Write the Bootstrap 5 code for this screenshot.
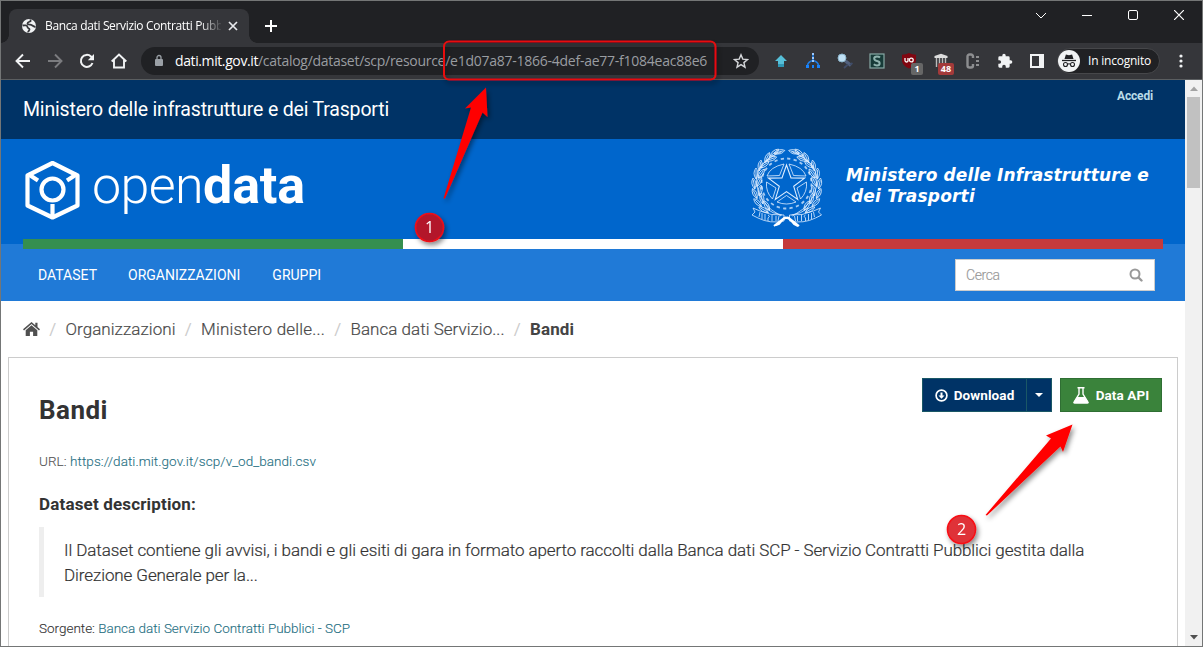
<!DOCTYPE html>
<html lang="it">
<head>
<meta charset="utf-8">
<meta name="viewport" content="width=device-width, initial-scale=1">
<title>Banca dati Servizio Contratti Pubblici - Bandi</title>
<link href="https://cdn.jsdelivr.net/npm/bootstrap@5.3.0/dist/css/bootstrap.min.css" rel="stylesheet">
<style>
  body { font-family: Roboto, "Open Sans", sans-serif; color: #333; font-size: 14px; line-height: 20px; }
  svg { display: block; flex: none; }
  a { text-decoration: none; }
  .browser { width: 1203px; height: 647px; border: 1px solid #747676; }
  .chrome { font-family: "Open Sans", "Noto Sans", sans-serif; color: #fff; flex: none; }
  .tabstrip { height: 42px; background: #202124; padding-left: 8px; }
  .tab-item { width: 240px; height: 34px; margin-top: 8px; background: #35363a; border-radius: 8px 8px 0 0; padding: 0 10px 0 12px; position: relative; }
  .tab-item::before, .tab-item::after { content: ""; position: absolute; bottom: 0; width: 8px; height: 8px; }
  .tab-item::before { left: -8px; background: radial-gradient(circle at 0 0, #202124 7.500px, #35363a 8px); }
  .tab-item::after { right: -8px; background: radial-gradient(circle at 100% 0, #202124 7.500px, #35363a 8px); }
  .tab-title { width: 176px; margin-left: 8px; font-size: 12px; letter-spacing: -.351px; -webkit-mask-image: linear-gradient(90deg, #000 155px, transparent 178px); mask-image: linear-gradient(90deg, #000 155px, transparent 178px); }
  .win-btn { width: 46px; height: 28px; }
  .toolbar { height: 37px; background: #35363a; border-bottom: 1px solid #5b5e60; padding-left: 6px; }
  .tool { width: 32px; height: 28px; flex: none; }
  .omnibox { width: 618px; height: 28px; margin: 0 6px; border-radius: 14px; background: #202124; font-size: 14px; color: #9a9da1; padding-left: 12px; padding-right: 10px; flex: none; }
  .address { margin-left: 10px; }
  .u-host { letter-spacing: -.396px; color: #fff; }
  .u-path { letter-spacing: -.287px; }
  .u-id { letter-spacing: -.25px; }
  .ext-badge { position: absolute; left: 18px; top: 16px; min-width: 12px; height: 12px; border-radius: 2px; background: #666; font: 700 9px/12px "Open Sans", sans-serif; text-align: center; }
  .ext-badge.hot { left: 13px; width: 16px; background: #a33a3a; }
  .incognito { width: 103px; height: 26px; margin-left: 4px; border: 1px solid #46474a; border-radius: 13px; background: #202124; font-size: 12px; letter-spacing: -.216px; flex: none; }
  .view { flex: 1; min-height: 0; }
  .site { width: 1184px; background: #fff; overflow: hidden; }
  .scroller { width: 17px; background: #f1f1f1; padding: 0 1px 0 2px; }
  .thumb { height: 91px; background: #c1c1c1; width: 13px; }
  .top-bar { height: 59px; background: #036; color: #fff; padding: 0 32px 0 22px; }
  .org-name { font-size: 19.5px; letter-spacing: -.18px; }
  .login { font-size: 12px; font-weight: 700; color: #b9dce8; margin-top: 6px; letter-spacing: -.164px; }
  .brand-bar { height: 100px; background: #06c; padding-left: 24px; color: #fff; }
  .cube { margin-top: 21px; }
  .wordmark { font-size: 52px; line-height: 60px; margin: 17px 0 0 12px; }
  .w-open { letter-spacing: -.621px; font-weight: 300; }
  .w-data { letter-spacing: -.133px; font-weight: 700; }
  .crest { margin-top: 9px; }
  .ministry { font: italic 700 17px/21px "DejaVu Sans", Verdana, sans-serif; letter-spacing: .114px; margin: 26px 36px 0 23px; width: 303px; }
  .ministry span { margin-left: 5px; letter-spacing: .204px; }
  .flag { height: 10px; padding: 0 22px 0 22px; background: linear-gradient(#06c 5px, #207ad7 5px); }
  .stripe-g { background: #358f4f; }
  .stripe-r { background: #c53a3c; }
  .menu-bar { height: 52px; background: #207ad7; padding: 0 30px 0 37px; }
  .menu-bar a { color: #fff; }
  .search-field { width: 200px; height: 32px; background: #fff; border: 1px solid #ccc; padding: 0 11px 0 10px; color: #999; margin-bottom: 1px; letter-spacing: -.4px; font-weight: 300; -webkit-text-stroke: .15px; }
  .crumbs { height: 56px; padding-left: 22px; font-size: 17px; }
  .crumbs a { color: #4a4a4a; font-weight: 300; }
  .crumbs i { width: 25.500px; text-align: center; color: #ccc; font-style: normal; }
  .crumbs b { color: #444; letter-spacing: .091px; }
  .panel { width: 1170px; height: 300px; margin-left: 7px; border: 1px solid #ccc; padding: 20px 15px 0 30px; }
  .panel h1 { font-size: 26px; line-height: 36px; font-weight: 700; margin: 14px 0 0; letter-spacing: .47px; }
  .act { height: 34px; font-size: 13.5px; font-weight: 700; border-radius: 0; border: 1px solid #1a5766; background: #036; color: #fff; padding: 0; }
  .act span { letter-spacing: .1px; }
  .act-main { width: 105px; }
  .act-caret { width: 26px; }
  .act-api { width: 102px; background: #3a833b; border-color: #2f6f33; }
  .src { color: #277083; }
  .meta { font-weight: 300; font-size: 13.5px; -webkit-text-stroke: .12px; }
  .meta-url { margin-top: 23px; color: #555; letter-spacing: .064px; }
  .meta-source { margin-top: 20.500px; letter-spacing: -.014px; }
  .sub { font-size: 17px; font-weight: 700; line-height: 22px; margin-top: 22px; letter-spacing: .166px; }
  .quote { border-left: 5px solid #eee; padding: 10.500px 20px 9.500px; margin-top: 12px; font-size: 17px; font-weight: 300; line-height: 25px; height: 70px; width: 1123px; letter-spacing: -.087px; }
  .quote, .crumbs a { -webkit-text-stroke: .2px; }
  .notes { position: absolute; left: 0; top: 0; pointer-events: none; }
</style>
</head>
<body>
<div class="browser d-flex flex-column position-relative overflow-hidden">
  <header class="chrome">
    <div class="tabstrip d-flex">
      <div class="tab-item d-flex align-items-center">
        <svg width="16" height="16" viewBox="0 0 16 16"><circle cx="8" cy="8" r="7" fill="#f1f3f4"/><path d="M1.500 7.500c2.500-.5 5-.2 5 1.500s2 .8 2 2.300-1.500 1.500-1.300 3M9.500 1.500v1.800C8 4 6.500 4 6.500 5.500s3 1 4 1.500 1.500 1.500 4 2" fill="none" stroke="#35363a" stroke-width="1.800"/></svg>
        <span class="tab-title text-nowrap overflow-hidden">Banca dati Servizio Contratti Pubb</span>
        <svg class="ms-auto" width="12" height="12" viewBox="0 0 12 12"><path d="M2 2l8 8M10 2l-8 8" stroke="#e8eaed" stroke-width="1.700"/></svg>
      </div>
      <svg class="mt-3 ms-3" width="12" height="18" viewBox="0 0 12 18"><path d="M0 9h12M6 3v12" stroke="#fff" stroke-width="2"/></svg>
      <div class="ms-auto d-flex">
        <span class="win-btn d-flex align-items-center justify-content-center"><svg width="10" height="7"><path d="M0 1l5 5 5-5" fill="none" stroke="#fff"/></svg></span>
        <span class="win-btn d-flex align-items-center justify-content-center"><svg width="10" height="1"><path d="M0 .5h10" stroke="#fff"/></svg></span>
        <span class="win-btn d-flex align-items-center justify-content-center"><svg width="10" height="10"><rect x=".5" y=".5" width="9" height="9" rx="1.500" fill="none" stroke="#fff"/></svg></span>
        <span class="win-btn d-flex align-items-center justify-content-center"><svg width="10" height="10"><path d="M0 0l10 10M10 0L0 10" stroke="#fff" stroke-width="1.200"/></svg></span>
      </div>
    </div>
    <div class="toolbar d-flex align-items-center">
      <span class="tool d-flex align-items-center justify-content-center"><svg width="16" height="16" fill="none" stroke="#f1f3f4" stroke-width="1.900"><path d="M15 8H2M8 1.500L1.500 8 8 14.500"/></svg></span>
      <span class="tool d-flex align-items-center justify-content-center"><svg width="16" height="16" fill="none" stroke="#7b7c7f" stroke-width="1.900"><path d="M1 8h13M8 1.500L14.500 8 8 14.500"/></svg></span>
      <span class="tool d-flex align-items-center justify-content-center"><svg width="16" height="16"><path d="M13.500 10A6 6 0 1 1 12 3.500L13.500 5" fill="none" stroke="#f1f3f4" stroke-width="2"/><path d="M15 1v6.200H8.800z" fill="#f1f3f4"/></svg></span>
      <span class="tool d-flex align-items-center justify-content-center"><svg width="16" height="16" fill="none" stroke="#f1f3f4" stroke-width="1.900"><path d="M.7 8.500L8 1.500l7.300 7M3 7v7.500h10V7"/></svg></span>
      <div class="omnibox d-flex align-items-center">
        <svg width="12" height="14"><rect x="2" y="5" width="8" height="7" rx="1" fill="#9aa0a6"/><path d="M4 5V3.500a2 2 0 0 1 4 0V5" fill="none" stroke="#9aa0a6" stroke-width="1.300"/></svg>
        <span class="address text-nowrap"><span class="u-host">dati.mit.gov.it</span><span class="u-path">/catalog/dataset/scp/resource/</span><span class="u-id">e1d07a87-1866-4def-ae77-f1084eac88e6</span></span>
        <svg class="ms-auto" width="16" height="16" viewBox="0 0 16 16"><path d="M8 1.800l1.800 4.300 4.700.4-3.600 3.100 1.100 4.600L8 11.700l-4 2.500 1.100-4.600-3.600-3.100 4.700-.4z" fill="none" stroke="#d5d7da" stroke-width="1.400"/></svg>
      </div>
      <span class="tool d-flex align-items-center justify-content-center"><svg width="16" height="16"><path d="M8 2l6 6h-3v5.500H5V8H2z" fill="#56bfd8"/><path d="M5 11h6v3H5z" fill="#2f97b5"/></svg></span>
      <span class="tool d-flex align-items-center justify-content-center"><svg width="16" height="16"><path d="M8 2v7M2.500 12q1-3.500 5.500-4.500 4.500 1 5.500 4.500" fill="none" stroke="#1f7fe8" stroke-width="1.600"/><g fill="#9cc9ff"><rect x="7" y="0" width="2" height="2"/><rect x="7" y="4" width="2" height="2"/><rect x="7" y="7" width="2" height="2"/></g><g fill="#1683ff"><rect x="1" y="12" width="3" height="3"/><rect x="7" y="12" width="2" height="3"/><rect x="12" y="12" width="3" height="3"/></g></svg></span>
      <span class="tool d-flex align-items-center justify-content-center"><svg width="16" height="16"><circle cx="5" cy="5" r="4" fill="#bfe0f4" stroke="#8cb5cc"/><path d="M8.500 8l5.500 4.500" stroke="#52617d" stroke-width="3.500"/><path d="M7 15l4-3.500M13 12l2.500-2" stroke="#3f4c68" stroke-width="1.800"/></svg></span>
      <span class="tool d-flex align-items-center justify-content-center"><svg width="16" height="16"><rect x="1" y="1" width="14" height="14" fill="#173b38" stroke="#87aaa5" stroke-width="1.200"/><path d="M11 4.500Q10 3.500 8 3.500C4 3.500 4.500 7.500 8 8s3.500 4.500 0 4.500q-2 0-3.200-1.200" fill="none" stroke="#8fb3ae" stroke-width="2"/></svg></span>
      <span class="tool position-relative d-flex align-items-center justify-content-center"><svg width="16" height="16"><path d="M8 0q3 1.600 7 1.800v6Q14.500 13 8 15.500 1.500 13 1 7.800v-6Q5 1.600 8 0z" fill="#800610"/><path d="M4 5v2.500q0 1.500 1.500 1.500T7 7.500V5" fill="none" stroke="#fff" stroke-width="1.300"/><circle cx="10.300" cy="7" r="1.900" fill="none" stroke="#fff" stroke-width="1.300"/></svg><span class="ext-badge">1</span></span>
      <span class="tool position-relative d-flex align-items-center justify-content-center"><svg width="16" height="16"><path d="M1.500 5V3L8 .8 14.500 3v2z" fill="#ddd"/><path d="M3.500 5v9M6.500 5v9M9.500 5v9M12.500 5v9" stroke="#bbb" stroke-width="1.400"/></svg><span class="ext-badge hot">48</span></span>
      <span class="tool d-flex align-items-center justify-content-center"><svg width="16" height="16"><path d="M8 5V3.500a2 2 0 0 0-2-2H4.500a2 2 0 0 0-2 2v9a2 2 0 0 0 2 2H6a2 2 0 0 0 2-2V11" fill="none" stroke="#8d8e90" stroke-width="2.400"/><path d="M12.500 3v10" stroke="#8d8e90" stroke-width="3" stroke-dasharray="2 2"/></svg></span>
      <span class="tool d-flex align-items-center justify-content-center"><svg width="16" height="16" viewBox="0 0 24 24"><path d="M20.500 11H19V7a2 2 0 0 0-2-2h-4V3.500a2.500 2.500 0 0 0-5 0V5H4a2 2 0 0 0-2 2v3.800h1.500a2.700 2.700 0 0 1 0 5.400H2V20a2 2 0 0 0 2 2h3.800v-1.500a2.700 2.700 0 0 1 5.400 0V22H17a2 2 0 0 0 2-2v-4h1.500a2.500 2.500 0 0 0 0-5z" fill="#f1f3f4"/></svg></span>
      <span class="tool d-flex align-items-center justify-content-center"><svg width="14" height="14"><path d="M0 0h14v14H0zM2 2v10h7V2z" fill="#f1f3f4" fill-rule="evenodd"/></svg></span>
      <div class="incognito d-flex align-items-center">
        <svg width="22" height="22" viewBox="0 0 22 22"><circle cx="11" cy="11" r="11" fill="#f1f3f4"/><path d="M4 10.500h14" stroke="#202124" stroke-width="1.300"/><path d="M6.500 9l1.400-4.500 3.100.7 3.100-.7L15.500 9z" fill="#202124"/><g fill="none" stroke="#202124" stroke-width="1.100"><circle cx="7.500" cy="14.500" r="2"/><circle cx="14.500" cy="14.500" r="2"/><path d="M9.500 14.300q1.500-1 3 0"/></g></svg>
        <span class="text-nowrap ms-2">In incognito</span>
      </div>
      <svg class="mx-auto" width="4" height="14"><g fill="#f1f3f4"><circle cx="2" cy="2" r="1.600"/><circle cx="2" cy="7" r="1.600"/><circle cx="2" cy="12" r="1.600"/></g></svg>
    </div>
  </header>

  <div class="view d-flex">
    <main class="site">
      <div class="top-bar d-flex justify-content-between">
        <span class="org-name align-self-center text-nowrap">Ministero delle infrastrutture e dei Trasporti</span>
        <a class="login align-self-start" href="#">Accedi</a>
      </div>
      <div class="brand-bar d-flex align-items-start">
        <svg class="cube" width="55" height="61" viewBox="0 0 55 61" fill="none" stroke="#fff" stroke-width="4.200"><path d="M27.500 3L52.500 15.500v30L27.500 57.500 2.500 45.500v-30z" stroke-linejoin="round"/><circle cx="27.500" cy="29.500" r="11"/><path d="M3 14l10 6.500M52 14l-10 6.500M27.500 44v13"/></svg>
        <span class="wordmark text-nowrap"><span class="w-open">open</span><span class="w-data">data</span></span>
        <svg class="crest ms-auto" width="72" height="82" viewBox="0 0 72 82" fill="none" stroke="#dfeeff" stroke-width=".8">
          <defs>
            <g id="leaf"><path d="M0 5Q-4-1 0-6 4-1 0 5zM0 5v-9"/></g>
            <g id="branch">
              <use href="#leaf" transform="translate(28 4) rotate(75)"/><use href="#leaf" transform="translate(23 5) rotate(50)"/><use href="#leaf" transform="translate(20 11) rotate(70)"/><use href="#leaf" transform="translate(16 10) rotate(25)"/><use href="#leaf" transform="translate(13 17) rotate(55)"/><use href="#leaf" transform="translate(9 18) rotate(10)"/><use href="#leaf" transform="translate(10 26) rotate(35)"/><use href="#leaf" transform="translate(5 26) rotate(0)"/><use href="#leaf" transform="translate(8 34) rotate(25)"/><use href="#leaf" transform="translate(3 36) rotate(-10)"/><use href="#leaf" transform="translate(9 43) rotate(10)"/><use href="#leaf" transform="translate(4 46) rotate(-25)"/><use href="#leaf" transform="translate(11 51) rotate(-10)"/><use href="#leaf" transform="translate(7 55) rotate(-45)"/><use href="#leaf" transform="translate(16 58) rotate(-30)"/><use href="#leaf" transform="translate(13 62) rotate(-60)"/>
              <path d="M30 4Q2 16 6 38q2 18 24 30M14 60q8 6 17 7"/>
              <path d="M2 60l7 3q11 5 24 4v6q-14 3-26-3l-6-3 3-3z"/><path d="M9 64l-1 5m3-4v6m3-5v6m3-5q3 1 0 3v3m4-6v6m4-5v5m3-5l-1 5"/>
            </g>
          </defs>
          <use href="#branch"/><use href="#branch" transform="translate(71.500 0) scale(-1 1)"/>
          <circle cx="35.500" cy="35.500" r="25" stroke-width="1.800" stroke-dasharray="3.270 3.270" opacity=".75"/>
          <path d="M35.500 17l4.500 12.900 13.600.2-10.900 8.200 4 13.100-11.200-7.800-11.200 7.800 4-13.100-10.900-8.200 13.600-.2z" stroke-width="1.100"/>
          <path d="M33 16l-4.500 11.500-12.500.5q3-9 17-12zM38 16l4.500 11.500 12.500.5q-3-9-17-12zM15.500 34l9.500 6-3.500 11q-7-7-6-17zM55.500 34l-9.500 6 3.500 11q7-7 6-17zM26 54l9.500-6.500 9.500 6.500q-9.500 4-19 0z"/>
          <path d="M23 78l10-8q4-2 10 6l4 2M48 78l-10-8q-4-2-10 6l-3 1" stroke-width="2" stroke="#fff"/>
        </svg>
        <div class="ministry text-nowrap">Ministero delle Infrastrutture e<br><span>dei Trasporti</span></div>
      </div>
      <div class="flag d-flex"><div class="stripe-g flex-fill"></div><div class="flex-fill bg-white"></div><div class="stripe-r flex-fill"></div></div>
      <nav class="menu-bar d-flex align-items-center">
        <a href="#">DATASET</a><a style="margin-left:31px" href="#">ORGANIZZAZIONI</a><a style="margin-left:32px" href="#">GRUPPI</a>
        <div class="search-field ms-auto d-flex align-items-center justify-content-between"><span>Cerca</span><svg width="14" height="14"><circle cx="6" cy="6" r="4.500" fill="none" stroke="#999" stroke-width="2"/><path d="M9.500 9.500l3 3" stroke="#999" stroke-width="2.400" stroke-linecap="round"/></svg></div>
      </nav>
      <div class="crumbs d-flex align-items-center text-nowrap">
        <svg width="17" height="14" viewBox="0 0 17 14" fill="#505050"><path d="M8.500 0L0 7.200l1 1.200 7.500-6.300L16 8.400l1-1.200-2.500-2.100V.8h-2.200v2.400z"/><path d="M8.500 3.300L2.700 8.200V14h4.200V9.800h3.200V14h4.200V8.200z"/></svg><i>/</i>
        <a style="letter-spacing:.053px" href="#">Organizzazioni</a><i>/</i><a style="letter-spacing:.185px" href="#">Ministero delle...</a><i>/</i><a style="letter-spacing:.024px" href="#">Banca dati Servizio...</a><i>/</i><b>Bandi</b>
      </div>
      <section class="panel">
        <div class="d-flex justify-content-between align-items-start">
          <h1>Bandi</h1>
          <div class="d-flex gap-2">
            <div class="btn-group">
              <button class="btn act act-main d-flex align-items-center justify-content-center"><svg width="13" height="13"><circle cx="6.500" cy="6.500" r="5.400" fill="none" stroke="#fff" stroke-width="1.700"/><path d="M5.500 3.500h2v3h2l-3 3.200-3-3.200h2z" fill="#fff"/></svg><span style="margin-left:6px">Download</span></button>
              <button class="btn act act-caret d-flex align-items-center justify-content-center"><svg width="8" height="4"><path d="M0 0h8L4 4z" fill="#fff"/></svg></button>
            </div>
            <button class="btn act act-api d-flex align-items-center justify-content-center"><svg width="16" height="17" viewBox="0 0 16 17" fill="none" stroke="#fff"><path d="M4.500 .7h7M6 1v6L1 15.200q-.3.800.6.800h12.800q.9 0 .6-.8L10 7V1" stroke-width="1.400"/><path d="M4 10.500h8l3 5H1z" fill="#fff"/></svg><span style="margin-left:7px">Data API</span></button>
          </div>
        </div>
        <div class="meta meta-url text-nowrap">URL: <a class="src" href="#">https://dati.mit.gov.it/scp/v_od_bandi.csv</a></div>
        <div class="sub">Dataset description:</div>
        <div class="quote text-nowrap">Il Dataset contiene gli avvisi, i bandi e gli esiti di gara in formato aperto raccolti dalla Banca dati SCP - Servizio Contratti Pubblici gestita dalla<br>Direzione Generale per la...</div>
        <div class="meta meta-source text-nowrap">Sorgente: <a class="src" href="#">Banca dati Servizio Contratti Pubblici - SCP</a></div>
      </section>
    </main>
    <aside class="scroller d-flex flex-column">
      <svg width="14" height="17"><path d="M3 11h8L7 6.500z" fill="#a3a3a3"/></svg>
      <div class="thumb"></div>
      <svg class="mt-auto" width="14" height="17"><path d="M3 6h8l-4 4.500z" fill="#505050"/></svg>
    </aside>
  </div>

  <svg class="notes" width="1201" height="645" viewBox="1 1 1201 645">
    <defs><filter id="soft" x="-20%" y="-20%" width="150%" height="150%"><feDropShadow dx="2" dy="3" stdDeviation="2.500" flood-color="#000" flood-opacity=".45"/></filter></defs>
    <g filter="url(#soft)">
      <rect x="444" y="41.500" width="271.500" height="38" rx="5" fill="none" stroke="#e80c0f" stroke-width="2"/>
      <path d="M443.500 198.500L471 107.500 465 108.500 486 87.500 487.500 117 482.500 112.500 445 198.500z" fill="red"/>
      <path d="M985.500 515L1051 438.500 1046 435.500 1072.500 424.500 1063 452 1060.500 446.500 987 515.500z" fill="red"/>
    </g>
    <g filter="url(#soft)" font-family="Open Sans, sans-serif" font-size="16" fill="#fff" text-anchor="middle">
      <circle cx="429.500" cy="227.500" r="14" fill="#b3152c" stroke="#f01018" stroke-width="1.600"/><text x="429.500" y="233">1</text>
      <circle cx="961.500" cy="529.500" r="14" fill="#df3237" stroke="#f81014" stroke-width="1.600"/><text x="961.500" y="535">2</text>
    </g>
  </svg>
</div>
<script src="https://cdn.jsdelivr.net/npm/bootstrap@5.3.0/dist/js/bootstrap.bundle.min.js"></script>
</body>
</html>
